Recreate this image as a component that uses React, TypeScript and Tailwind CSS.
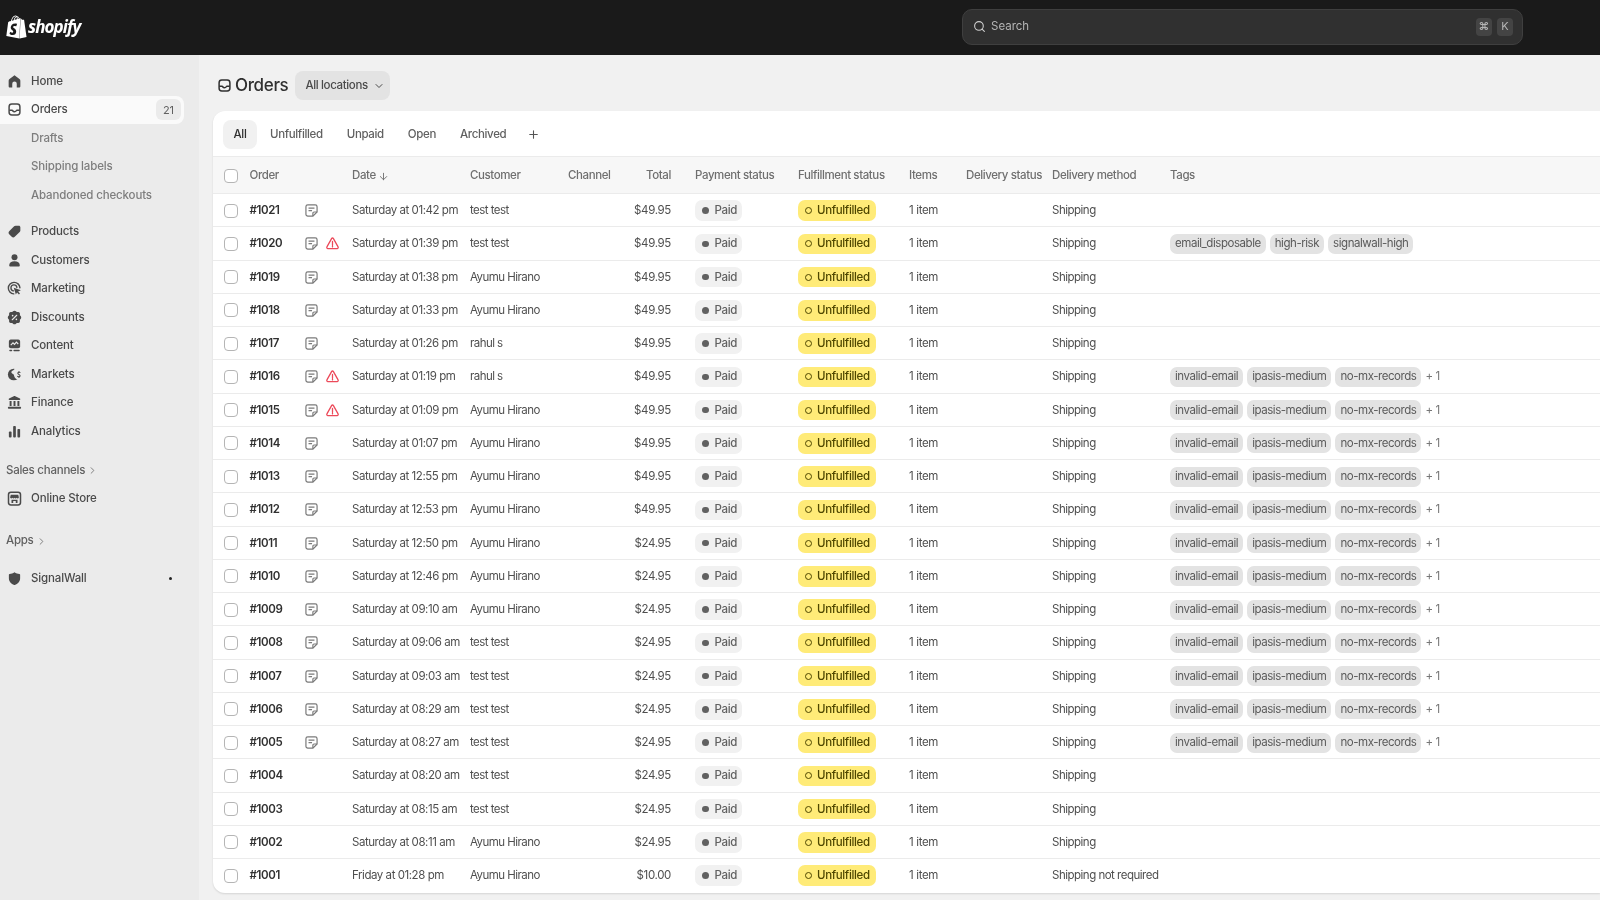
import { ReactNode } from "react"
import { ArrowDown, ChevronDown, ChevronRight, Plus, Search } from "lucide-react"
import { SiShopify } from "react-icons/si"

const svg = (children: ReactNode, cls = "h-[15px] w-[15px]") => (
  <svg viewBox="0 0 20 20" className={cls} fill="currentColor">
    {children}
  </svg>
)

const OrdersIcon = ({ cls }: { cls?: string }) =>
  svg(
    <>
      <rect x="2.8" y="2.8" width="14.4" height="14.4" rx="3.6" fill="none" stroke="currentColor" strokeWidth="2" />
      <path d="M3 11h3.6c.7 0 1 .5 1.3 1 .4.7 1 1 2.1 1s1.7-.3 2.1-1c.3-.5.6-1 1.3-1H17" fill="none" stroke="currentColor" strokeWidth="2" />
    </>,
    cls,
  )

const icons: Record<string, ReactNode> = {
  Home: svg(<path d="M10 1.8 3.4 6.7C2.6 7.3 2.2 8 2.2 9v7.4c0 1 .7 1.7 1.7 1.7H7v-5a3 3 0 0 1 6 0v5h3.100c1 0 1.700-.7 1.700-1.700V9c0-1-.4-1.700-1.200-2.300z" />),
  Orders: <OrdersIcon />,
  Products: svg(<path d="M11.500 2.200h4.300c1.100 0 2 .9 2 2v4.300c0 .8-.3 1.500-.9 2l-6.600 6.600c-1.100 1.100-2.900 1.100-4 0l-3.400-3.400c-1.100-1.100-1.100-2.900 0-4l6.600-6.600c.5-.6 1.200-.9 2-.9z" />),
  Customers: svg(
    <>
      <circle cx="10" cy="5.600" r="4" />
      <path d="M10 11c-4.200 0-7 2.200-7 5v.6c0 .9.700 1.400 1.500 1.400h11c.8 0 1.500-.5 1.500-1.400V16c0-2.800-2.800-5-7-5z" />
    </>,
  ),
  Marketing: svg(
    <>
      <path d="M9 17.200A7.700 7.700 0 1 1 17.200 9" fill="none" stroke="currentColor" strokeWidth="1.900" strokeLinecap="round" />
      <path d="M8.600 13.200A4 4 0 1 1 13.200 8.600" fill="none" stroke="currentColor" strokeWidth="1.800" strokeLinecap="round" />
      <path d="m9 9 9.500 3.200-3.700 1.800 2.500 2.600-1.400 1.400-2.500-2.600L11.800 18z" />
    </>,
  ),
  Discounts: svg(
    <>
      <path d="M8 1.800c1-1 3-1 4 0l1 1h2.200c1 0 2 1 2 2v2.200l1 1c1 1 1 3 0 4l-1 1v2.200c0 1-1 2-2 2H13l-1 1c-1 1-3 1-4 0l-1-1H4.800c-1 0-2-1-2-2V13l-1-1c-1-1-1-3 0-4l1-1V4.800c0-1 1-2 2-2H7z" />
      <path d="m7 13 6-6" stroke="#ebebeb" strokeWidth="1.500" strokeLinecap="round" />
      <circle cx="7.500" cy="7.500" r="1.100" fill="#ebebeb" />
      <circle cx="12.500" cy="12.500" r="1.100" fill="#ebebeb" />
    </>,
  ),
  Content: svg(
    <>
      <rect x="2.500" y="2" width="15" height="11.500" rx="2.500" />
      <path d="M5 9.500 8 6.500l2 2 2.500-3 2.500 2.500" fill="none" stroke="#ebebeb" strokeWidth="1.500" />
      <rect x="3" y="15.800" width="4" height="2" rx="1" />
      <rect x="8.500" y="15.800" width="8.500" height="2" rx="1" />
    </>,
  ),
  Markets: svg(
    <>
      <circle cx="9" cy="10" r="7.800" />
      <path d="M11 1c-.5 2-2 3.200-3.800 4-1.500.7-1.800 2.300-.7 3.300 1 .9 2.500 1 2.700 2.300.2 2 1.400 3.900 3.300 5.400L20 18V1z" fill="#ebebeb" />
      <path d="M17.800 7.800c-.6-1-3-1-3.400.4-.5 1.800 3.500 1.700 3.100 3.700-.3 1.500-3 1.500-3.600.2M16 5.400v1.600M16 12.900v1.700" fill="none" stroke="currentColor" strokeWidth="1.400" />
    </>,
  ),
  Finance: svg(
    <>
      <path d="M9 1.700c.6-.3 1.400-.3 2 0l6.300 3.100c.9.500.6 1.900-.5 1.900H3.200c-1.100 0-1.400-1.400-.5-1.900z" />
      <path d="M3.500 8h2.600v6.500H3.500zM8.700 8h2.600v6.500H8.700zM13.900 8h2.600v6.500h-2.600zM2.300 15.700h15.400c.7 0 1.100.5 1.100 1.100v.4c0 .6-.4 1.100-1.100 1.100H2.300c-.7 0-1.100-.5-1.100-1.100v-.4c0-.6.4-1.100 1.100-1.100z" />
    </>,
  ),
  Analytics: svg(
    <>
      <rect x="2.500" y="10" width="3.600" height="8" rx="1.200" />
      <rect x="8.200" y="2.500" width="3.600" height="15.500" rx="1.200" />
      <rect x="13.900" y="6.500" width="3.600" height="11.500" rx="1.200" />
    </>,
  ),
  "Online Store": svg(
    <>
      <rect x="2" y="1.500" width="16" height="17" rx="3.200" fill="none" stroke="currentColor" strokeWidth="2" />
      <path d="M5 5h10l.8 3.400c0 2-2.400 2-2.900.6-.5 1.400-2.400 1.400-2.900 0-.5 1.400-2.400 1.400-2.900 0-.5 1.400-2.900 1.400-2.900-.6z" />
      <path d="M6 11.500h8V16h-2.300v-2.800H8.300V16H6z" />
    </>,
  ),
  SignalWall: svg(<path d="M10 1.500c2 1.500 4.300 2.200 6.500 2.400.6.100 1 .5 1 1.100v4.500c0 4.500-3.200 7.600-7.100 9-.3.100-.5.100-.8 0-3.900-1.400-7.100-4.500-7.100-9V5c0-.6.400-1 1-1.100C5.700 3.700 8 3 10 1.500z" />),
}

type NavProps = { label: string; active?: boolean; sub?: boolean; badge?: string; dot?: boolean }

const NavItem = ({ label, active, sub, badge, dot }: NavProps) => (
  <div className={`flex h-[28.5px] w-[184px] items-center rounded-r-lg pr-[3px] ${active ? "bg-[#fafafa]" : ""}`}>
    <span className="flex w-[31px] shrink-0 justify-center pr-[2px] text-[#4a4a4a]">{icons[label]}</span>
    <span className={`text-[11.5px] font-medium tracking-[-0.15px] ${sub ? "text-[#7d7d7d]" : "text-[#4a4a4a]"}`}>{label}</span>
    {badge && (
      <span className="ml-auto flex h-[21px] w-[25px] items-center justify-center rounded-md bg-[#ebebeb] text-[11px] text-[#616161]">
        {badge}
      </span>
    )}
    {dot && <span className="ml-auto mr-[9px] h-[3px] w-[3px] rounded-full bg-[#222]" />}
  </div>
)

const SectionLabel = ({ label }: { label: string }) => (
  <div className="flex h-[28px] items-center gap-[2px] pl-[6px] text-[11.5px] font-medium tracking-[-0.25px] text-[#616161]">
    {label}
    <ChevronRight className="h-[11px] w-[11px] text-[#777]" strokeWidth={2} />
  </div>
)

const Sidebar = () => (
  <aside className="w-[199px] shrink-0 bg-[#ebebeb] pt-[12px]">
    <NavItem label="Home" />
    <NavItem label="Orders" active badge="21" />
    <NavItem label="Drafts" sub />
    <NavItem label="Shipping labels" sub />
    <NavItem label="Abandoned checkouts" sub />
    <div className="mt-[8px]">
      {["Products", "Customers", "Marketing", "Discounts", "Content", "Markets", "Finance", "Analytics"].map((l) => (
        <NavItem key={l} label={l} />
      ))}
    </div>
    <div className="mt-[11px]">
      <SectionLabel label="Sales channels" />
      <NavItem label="Online Store" />
    </div>
    <div className="mt-[14px]">
      <SectionLabel label="Apps" />
    </div>
    <div className="mt-[9px]">
      <NavItem label="SignalWall" dot />
    </div>
  </aside>
)

const NoteIcon = () => (
  <svg viewBox="0 0 14 14" className="h-[13px] w-[13px] text-[#7a7a7a]" fill="none" stroke="currentColor" strokeWidth="1.300">
    <path d="M3 1h8a2 2 0 0 1 2 2v5.500L8.500 13H3a2 2 0 0 1-2-2V3a2 2 0 0 1 2-2z" />
    <path d="M3.800 4.500h6.400M3.800 7.200h3.800M8.500 13V9.800c0-.7.500-1.200 1.200-1.200H13" />
  </svg>
)

const WarnIcon = () => (
  <svg viewBox="0 0 14 14" className="h-[13px] w-[13px] text-[#ec4a5a]" fill="none" stroke="currentColor" strokeWidth="1.400">
    <path d="M6 1.700c.5-.8 1.500-.8 2 0l5 9c.4.800-.1 1.800-1 1.800H2c-.9 0-1.400-1-1-1.800z" strokeLinejoin="round" />
    <path d="M7 4.800v3.700M7 9.700v1" strokeLinecap="round" />
  </svg>
)

const Checkbox = () => <span className="block h-[14px] w-[14px] rounded-[4px] border border-[#b5b5b5] bg-white" />

const cols = "grid grid-cols-[25.5px_102.5px_118px_98px_52px_51px_24px_103px_111px_57px_86px_118px_1fr] items-center pl-[11px]"

const tagSet1 = ["email_disposable", "high-risk", "signalwall-high"]
const tagSet2 = ["invalid-email", "ipasis-medium", "no-mx-records"]

type Order = {
  id: string
  date: string
  customer: string
  total: string
  note?: boolean
  warn?: boolean
  tags?: string[]
  more?: boolean
  method?: string
}

const AH = "Ayumu Hirano"
const TT = "test test"

const orders: Order[] = [
  { id: "#1021", date: "Saturday at 01:42 pm", customer: TT, total: "$49.95", note: true },
  { id: "#1020", date: "Saturday at 01:39 pm", customer: TT, total: "$49.95", note: true, warn: true, tags: tagSet1 },
  { id: "#1019", date: "Saturday at 01:38 pm", customer: AH, total: "$49.95", note: true },
  { id: "#1018", date: "Saturday at 01:33 pm", customer: AH, total: "$49.95", note: true },
  { id: "#1017", date: "Saturday at 01:26 pm", customer: "rahul s", total: "$49.95", note: true },
  { id: "#1016", date: "Saturday at 01:19 pm", customer: "rahul s", total: "$49.95", note: true, warn: true, tags: tagSet2, more: true },
  { id: "#1015", date: "Saturday at 01:09 pm", customer: AH, total: "$49.95", note: true, warn: true, tags: tagSet2, more: true },
  { id: "#1014", date: "Saturday at 01:07 pm", customer: AH, total: "$49.95", note: true, tags: tagSet2, more: true },
  { id: "#1013", date: "Saturday at 12:55 pm", customer: AH, total: "$49.95", note: true, tags: tagSet2, more: true },
  { id: "#1012", date: "Saturday at 12:53 pm", customer: AH, total: "$49.95", note: true, tags: tagSet2, more: true },
  { id: "#1011", date: "Saturday at 12:50 pm", customer: AH, total: "$24.95", note: true, tags: tagSet2, more: true },
  { id: "#1010", date: "Saturday at 12:46 pm", customer: AH, total: "$24.95", note: true, tags: tagSet2, more: true },
  { id: "#1009", date: "Saturday at 09:10 am", customer: AH, total: "$24.95", note: true, tags: tagSet2, more: true },
  { id: "#1008", date: "Saturday at 09:06 am", customer: TT, total: "$24.95", note: true, tags: tagSet2, more: true },
  { id: "#1007", date: "Saturday at 09:03 am", customer: TT, total: "$24.95", note: true, tags: tagSet2, more: true },
  { id: "#1006", date: "Saturday at 08:29 am", customer: TT, total: "$24.95", note: true, tags: tagSet2, more: true },
  { id: "#1005", date: "Saturday at 08:27 am", customer: TT, total: "$24.95", note: true, tags: tagSet2, more: true },
  { id: "#1004", date: "Saturday at 08:20 am", customer: TT, total: "$24.95" },
  { id: "#1003", date: "Saturday at 08:15 am", customer: TT, total: "$24.95" },
  { id: "#1002", date: "Saturday at 08:11 am", customer: AH, total: "$24.95" },
  { id: "#1001", date: "Friday at 01:28 pm", customer: AH, total: "$10.00", method: "Shipping not required" },
]

const OrderRow = ({ o }: { o: Order }) => (
  <div className={`${cols} h-[33.25px] whitespace-nowrap border-t border-[#ebebeb] pt-[1px] text-[11.5px] tracking-[-0.35px] text-[#4f4f4f]`}>
    <Checkbox />
    <div className="flex items-center">
      <span className="w-[55.5px] font-semibold text-[#303030]">{o.id}</span>
      {o.note && <NoteIcon />}
      {o.warn && <span className="ml-[8px] flex"><WarnIcon /></span>}
    </div>
    <span className="tracking-[-0.45px]">{o.date}</span>
    <span className="tracking-[-0.55px]">{o.customer}</span>
    <span />
    <span className="text-right">{o.total}</span>
    <span />
    <span className="flex h-[20.5px] w-[47px] items-center gap-[6px] rounded-[7px] bg-[#f1f1f1] pl-[7px] font-medium text-[#616161]">
      <span className="h-[6.5px] w-[6.5px] rounded-full bg-[#616161]" />
      Paid
    </span>
    <span className="flex h-[20.5px] w-[78px] items-center gap-[5px] rounded-[7px] bg-[#ffeb78] pl-[7px] font-medium text-[#4f4700]">
      <span className="h-[7px] w-[7px] rounded-full border-[1.3px] border-[#4f4700]" />
      Unfulfilled
    </span>
    <span>1 item</span>
    <span />
    <span className="tracking-[-0.5px]">{o.method ?? "Shipping"}</span>
    <div className="flex items-center gap-[4px] tracking-[-0.45px]">
      {o.tags?.map((t) => (
        <span key={t} className="flex h-[20px] items-center rounded-[7px] bg-[#e3e3e3] px-[5px] text-[#5a5a5a]">
          {t}
        </span>
      ))}
      {o.more && <span className="text-[#777]">+ 1</span>}
    </div>
  </div>
)

const headers = ["Order", "Date", "Customer", "Channel", "Total", "", "Payment status", "Fulfillment status", "Items", "Delivery status", "Delivery method", "Tags"]

const OrdersCard = () => (
  <div className="ml-[14px] mt-[11px] overflow-hidden rounded-l-xl bg-white pb-[1.5px] shadow-[0_1px_2px_rgba(0,0,0,0.12)]">
    <div className="flex h-[45px] items-center pl-[10px] pt-[2px] text-[11.5px] font-medium tracking-[-0.35px] text-[#616161]">
      <span className="mr-[1px] flex h-[29px] w-[34px] items-center justify-center rounded-lg bg-[#f1f1f1] text-[#303030]">All</span>
      {["Unfulfilled", "Unpaid", "Open", "Archived"].map((t) => (
        <span key={t} className="px-[12px]">{t}</span>
      ))}
      <Plus className="ml-[9px] h-[13px] w-[13px] text-[#555]" strokeWidth={2} />
    </div>
    <div className={`${cols} h-[37px] border-t border-[#ebebeb] bg-[#f7f7f7] pt-[2px] text-[11.5px] font-medium tracking-[-0.4px] text-[#6f6f6f]`}>
      <Checkbox />
      {headers.map((h, i) => (
        <span key={i} className={`flex items-center whitespace-nowrap ${h === "Total" ? "justify-end" : ""}`}>
          {h}
          {h === "Date" && <ArrowDown className="ml-[2px] h-[11px] w-[11px]" strokeWidth={2} />}
        </span>
      ))}
    </div>
    {orders.map((o) => (
      <OrderRow key={o.id} o={o} />
    ))}
  </div>
)

export default function App() {
  return (
    <div className="flex h-screen flex-col overflow-hidden bg-[#f1f1f1] font-[Inter,sans-serif] blur-[0.4px]">
      <header className="flex h-[55px] shrink-0 items-center bg-[#1a1a1a] pb-[2px] pl-[5px]">
        <SiShopify className="h-[26px] w-[23px] text-white" />
        <span className="font-['Noto_Sans',sans-serif] text-[17px] font-bold italic tracking-[-0.9px] text-white">shopify</span>
        <div className="ml-auto mr-[77px] flex h-[36px] w-[561px] items-center rounded-[10px] border border-[#3f3f3f] bg-[#303030] pl-[10px] pr-[9px] text-[11.5px] text-[#b5b5b5]">
          <Search className="h-[13px] w-[13px] text-[#d0d0d0]" strokeWidth={2} />
          <span className="ml-[5px]">Search</span>
          <span className="ml-auto flex h-[18px] w-[16px] items-center justify-center rounded bg-[#444] text-[11px] font-semibold">⌘</span>
          <span className="ml-[5px] flex h-[18px] w-[16px] items-center justify-center rounded bg-[#444] text-[11px]">K</span>
        </div>
      </header>
      <div className="flex min-h-0 flex-1">
        <Sidebar />
        <main className="min-w-0 flex-1">
          <div className="ml-[18px] mt-[16px] flex h-[29px] items-center">
            <OrdersIcon cls="h-[15px] w-[15px] text-[#303030]" />
            <h1 className="ml-[3px] text-[17px] font-medium tracking-[-0.35px] text-[#303030]">Orders</h1>
            <div className="ml-[7px] flex h-[29px] w-[95px] items-center whitespace-nowrap rounded-lg bg-[#e3e3e3] pl-[10px] text-[11.5px] font-medium tracking-[-0.35px] text-[#4a4a4a]">
              All locations
              <ChevronDown className="ml-[5px] h-[12px] w-[12px]" strokeWidth={2} />
            </div>
          </div>
          <OrdersCard />
        </main>
      </div>
    </div>
  )
}
